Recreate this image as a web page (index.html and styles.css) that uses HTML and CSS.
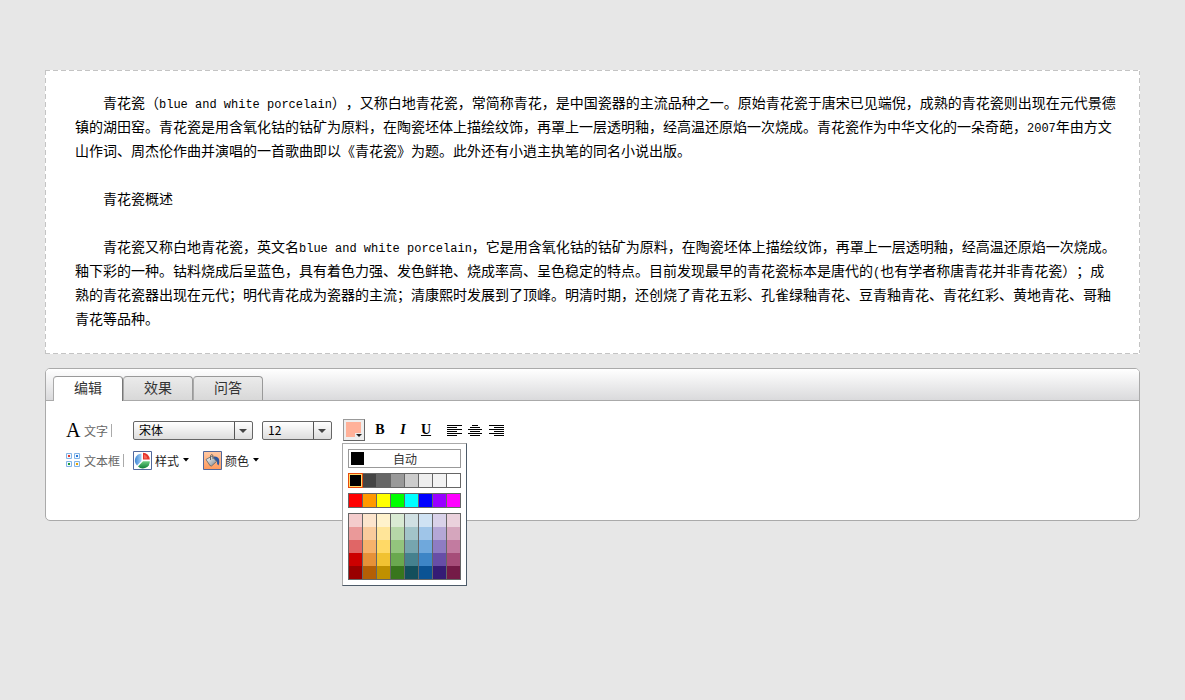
FILE: index.html
```html
<!DOCTYPE html>
<html lang="zh-CN">
<head>
<meta charset="utf-8">
<title>青花瓷</title>
<link rel="stylesheet" href="styles.css">
</head>
<body>
<main class="page">
  <article class="document">
    <p>青花瓷（<span class="latin">blue and white porcelain</span>），又称白地青花瓷，常简称青花，是中国瓷器的主流品种之一。原始青花瓷于唐宋已见端倪，成熟的青花瓷则出现在元代景德镇的湖田窑。青花瓷是用含氧化钴的钴矿为原料，在陶瓷坯体上描绘纹饰，再罩上一层透明釉，经高温还原焰一次烧成。青花瓷作为中华文化的一朵奇葩，<span class="latin">2007</span>年由方文山作词、周杰伦作曲并演唱的一首歌曲即以《青花瓷》为题。此外还有小逍主执笔的同名小说出版。</p>
    <p>青花瓷概述</p>
    <p>青花瓷又称白地青花瓷，英文名<span class="latin">blue and white porcelain</span>，它是用含氧化钴的钴矿为原料，在陶瓷坯体上描绘纹饰，再罩上一层透明釉，经高温还原焰一次烧成。釉下彩的一种。钴料烧成后呈蓝色，具有着色力强、发色鲜艳、烧成率高、呈色稳定的特点。目前发现最早的青花瓷标本是唐代的<span class="latin">(</span>也有学者称唐青花并非青花瓷）；成熟的青花瓷器出现在元代；明代青花成为瓷器的主流；清康熙时发展到了顶峰。明清时期，还创烧了青花五彩、孔雀绿釉青花、豆青釉青花、青花红彩、黄地青花、哥釉青花等品种。</p>
  </article>

  <section class="editor">
    <div class="tabs" role="tablist">
      <button class="tab active" type="button" role="tab" aria-selected="true">编辑</button>
      <button class="tab" type="button" role="tab" aria-selected="false">效果</button>
      <button class="tab" type="button" role="tab" aria-selected="false">问答</button>
    </div>
    <div class="tools">
      <div class="row">
        <div class="group-name">
          <span class="letter-icon" aria-hidden="true">A</span>
          <span class="group-text">文字</span>
        </div>
        <div class="select select-font">
          <select aria-label="字体"><option>宋体</option></select>
          <svg class="arrow" width="18" height="17" viewBox="0 0 18 17" aria-hidden="true"><path d="M0.500 0v17" stroke="#555"/><path d="M5 7h8l-4 4z" fill="#444"/></svg>
        </div>
        <div class="select select-size">
          <select aria-label="字号"><option>12</option></select>
          <svg class="arrow" width="18" height="17" viewBox="0 0 18 17" aria-hidden="true"><path d="M0.500 0v17" stroke="#555"/><path d="M5 7h8l-4 4z" fill="#444"/></svg>
        </div>
        <div class="color-picker">
          <button class="color-button" type="button" aria-label="文字颜色">
            <svg width="20" height="20" viewBox="0 0 20 20" aria-hidden="true"><path d="M2 2h15v15H2z" fill="#ffb199"/><path d="M11 13h7v5h-7z" fill="#ececec"/><path d="M12 14h6l-3 3z" fill="#222"/></svg>
          </button>
          <div class="palette">
            <button class="auto" type="button"><span class="auto-swatch"></span><span class="auto-text">自动</span></button>
            <div class="swatches grays">
              <button class="c000 selected" type="button" aria-label="黑"></button><button class="c444" type="button" aria-label="灰一"></button><button class="c666" type="button" aria-label="灰二"></button><button class="c999" type="button" aria-label="灰三"></button><button class="cccc" type="button" aria-label="灰四"></button><button class="ceee" type="button" aria-label="灰五"></button><button class="cf3" type="button" aria-label="灰六"></button><button class="cfff" type="button" aria-label="白"></button>
            </div>
            <div class="swatches brights">
              <button class="red" type="button" aria-label="红"></button><button class="orange" type="button" aria-label="橙"></button><button class="yellow" type="button" aria-label="黄"></button><button class="green" type="button" aria-label="绿"></button><button class="cyan" type="button" aria-label="青"></button><button class="blue" type="button" aria-label="蓝"></button><button class="purple" type="button" aria-label="紫"></button><button class="magenta" type="button" aria-label="品红"></button>
            </div>
            <div class="swatches shades" id="shades"></div>
          </div>
        </div>
        <div class="styles">
          <button class="icon-button" type="button" aria-label="粗体"><b>B</b></button>
          <button class="icon-button" type="button" aria-label="斜体"><b><i>I</i></b></button>
          <button class="icon-button" type="button" aria-label="下划线"><b><u>U</u></b></button>
        </div>
        <div class="aligns">
          <button class="icon-button" type="button" aria-label="左对齐"><svg width="15" height="13" viewBox="0 0 15 13"><path d="M0 1.500h15M0 3.500h10M0 5.500h15M0 7.500h10M0 9.500h15M0 11.500h10" stroke="#000"/></svg></button>
          <button class="icon-button" type="button" aria-label="居中"><svg width="15" height="13" viewBox="0 0 15 13"><path d="M4 1.500h6M2 3.500h10M0 5.500h14M2 7.500h10M0 9.500h14M2 11.500h10" stroke="#000"/></svg></button>
          <button class="icon-button" type="button" aria-label="右对齐"><svg width="15" height="13" viewBox="0 0 15 13"><path d="M0 1.500h15M5 3.500h10M0 5.500h15M5 7.500h10M0 9.500h15M5 11.500h10" stroke="#000"/></svg></button>
        </div>
      </div>
      <div class="row">
        <div class="group-name">
          <svg width="15" height="15" viewBox="0 0 15 15" aria-hidden="true"><g fill="#f2f8ff" stroke="#82b4e6"><path d="M.5.5h5v5h-5zM8.500.5h5v5h-5zM.5 8.500h5v5h-5zM8.500 8.500h5v5h-5z"/></g><path d="M2 2h2v2H2z" fill="#e23a2a"/><path d="M10 2h2v2h-2z" fill="#2a79d8"/><path d="M2 10h2v2H2z" fill="#1f9a35"/><path d="M10 10h2v2h-2z" fill="#e5a400"/></svg>
          <span class="group-text">文本框</span>
        </div>
        <button class="menu-button" type="button">
          <svg width="19" height="19" viewBox="0 0 19 19" aria-hidden="true"><defs><linearGradient id="pieBlue"><stop stop-color="#3f86d4"/><stop offset="1" stop-color="#a5d2f7"/></linearGradient><linearGradient id="pieGreen" x2="0" y2="1"><stop stop-color="#6fcf83"/><stop offset="1" stop-color="#0f7f36"/></linearGradient></defs><path d="M.5.5h18v18H.5z" fill="#fff" stroke="#52689c"/><path d="M8.500 2.500A7 7 0 0 0 4 14.500l4.500-4.500z" fill="url(#pieBlue)"/><path d="M10 1.800a6.800 6.800 0 0 1 6.800 6.700H10z" fill="#e5322b"/><path d="M11 3.500q3 1 3.500 4H11z" fill="#f4685a"/><path d="M16.800 10.200A7 7 0 0 1 5 15.500l5-5.300z" fill="url(#pieGreen)"/></svg>
          <span>样式</span>
          <svg width="7" height="4" viewBox="0 0 7 4" aria-hidden="true"><path d="M1 0h6L4 3.500z"/></svg>
        </button>
        <button class="menu-button" type="button">
          <svg width="19" height="19" viewBox="0 0 19 19" aria-hidden="true"><defs><linearGradient id="warm" x2="0" y2="1"><stop stop-color="#ffc9a5"/><stop offset="1" stop-color="#ff9a5c"/></linearGradient><linearGradient id="metal" x2="1" y2="1"><stop stop-color="#fff"/><stop offset="1" stop-color="#7f878e"/></linearGradient></defs><path d="M.5.5h18v18H.5z" fill="url(#warm)" stroke="#52689c"/><path d="M10.500 5.500q5-.5 5.700 3.500.5 3-.7 5.500-2-1-1.500-4L11 8z" fill="#2b559f"/><path d="M3 8.500l6-3.500 4.500 5.500-5 4.500q-2 0-2.500-2z" fill="url(#metal)" stroke="#5c6469" stroke-width=".8"/><path d="M7.500 9V4.500q1-2 2.500 0V8" fill="none" stroke="#666"/></svg>
          <span>颜色</span>
          <svg width="7" height="4" viewBox="0 0 7 4" aria-hidden="true"><path d="M1 0h6L4 3.500z"/></svg>
        </button>
      </div>
    </div>
  </section>
</main>
<script src="palette.js"></script>
</body>
</html>
```
FILE: styles.css
```css
* { box-sizing: border-box; }

body {
  margin: 0;
  background: #e7e7e7;
  color: #000;
  font-family: "Noto Sans CJK SC", sans-serif;
  font-size: 12px;
}

button, select {
  margin: 0;
  padding: 0;
  border: 0;
  background: none;
  color: inherit;
  font: inherit;
}

svg { display: block; flex: none; }

.page {
  display: flex;
  flex-direction: column;
  gap: 14px;
  padding: 70px 45px;
}

.document {
  --dash-x: repeating-linear-gradient(90deg, #c4c4c4 0 5px, #fff 5px 8px);
  --dash-y: repeating-linear-gradient(#c4c4c4 0 5px, #fff 5px 8px);
  display: flex;
  flex-direction: column;
  gap: 24px;
  padding: 20px 23px 24px 30px;
  background:
    var(--dash-x) top / 100% 1px no-repeat,
    var(--dash-x) bottom / 100% 1px no-repeat,
    var(--dash-y) left / 1px 100% no-repeat,
    var(--dash-y) right / 1px 100% no-repeat,
    #fff;
  font-size: 14px;
  line-height: 24px;
  text-spacing-trim: space-all;
}

.document p { margin: 0; text-indent: 28px; }

.latin {
  font-family: "Liberation Mono", monospace;
  font-size: 12px;
  line-height: 1;
}

.editor {
  min-height: 153px;
  border: 1px solid #aaa;
  border-radius: 5px;
  background: #fff;
}

.tabs {
  display: flex;
  height: 32px;
  padding: 7px 7px 0;
  border-bottom: 1px solid #aaa;
  border-radius: 4px 4px 0 0;
  background: linear-gradient(#fff, #dadadc);
}

.tab {
  width: 70px;
  height: 24px;
  border: 1px solid #999;
  border-left-color: #aaa;
  border-bottom: 0;
  border-radius: 4px 4px 0 0;
  background: linear-gradient(#ebebeb, #d8d8d8);
  color: #333;
  font-size: 14px;
  line-height: 20px;
  padding-bottom: 3px;
}

.tab.active { height: 25px; padding-bottom: 4px; border-right-color: #777; background: #fff; }

.tools {
  display: flex;
  flex-direction: column;
  gap: 8px;
  padding: 18px 20px;
}

.row { display: flex; align-items: center; height: 22px; }

.group-name {
  display: flex;
  align-items: center;
  gap: 3px;
  width: 67px;
  color: #666;
}

.letter-icon {
  width: 15px;
  color: #000;
  font-family: "Liberation Serif", serif;
  font-size: 20px;
  line-height: 20px;
}

.group-text {
  padding-right: 3px;
  border-right: 1px solid #aaa;
  line-height: 13px;
}

.select {
  display: grid;
  height: 19px;
  margin-right: 9px;
  border: 1px solid #666;
  border-radius: 2px;
  background: linear-gradient(#fff, #ddd);
}

.select-font { width: 120px; }
.select-size { width: 70px; margin-right: 11px; }

.select select {
  grid-area: 1 / 1;
  width: 100%;
  height: 16px;
  padding-left: 5px;
  appearance: none;
  line-height: 16px;
}

.arrow { grid-area: 1 / 1; justify-self: end; pointer-events: none; }

.color-picker { position: relative; margin-right: 5px; }

.color-button {
  display: block;
  width: 22px;
  height: 22px;
  border: 1px solid #999;
  border-right-color: #666;
  border-bottom-color: #666;
  background: #eee;
}

.palette {
  position: absolute;
  top: 24px;
  left: -1px;
  z-index: 1;
  display: flex;
  flex-direction: column;
  gap: 5px;
  width: 125px;
  padding: 5px;
  border: 1px solid #aaa;
  border-right-color: #4c5a68;
  border-bottom-color: #4c5a68;
  background: #fff;
}

.auto {
  display: flex;
  align-items: center;
  height: 19px;
  padding: 0 2px;
  border: 1px solid #999;
  line-height: 17px;
}

.auto-swatch { width: 13px; height: 13px; background: #000; }
.auto-text { flex: 1; padding-right: 12px; color: #333; text-align: center; }

.swatches {
  display: grid;
  grid-template-columns: repeat(8, 1fr);
  column-gap: 1px;
  border: 1px solid #666;
  background: #666;
}

.swatches button { height: 13px; }
.swatches .selected { outline: 1px solid #e84a0c; box-shadow: inset 0 0 0 1px #ffd96a; }

.c000 { background: #000; }
.c444 { background: #444; }
.c666 { background: #666; }
.c999 { background: #999; }
.cccc { background: #ccc; }
.ceee { background: #eee; }
.cf3 { background: #f3f3f3; }
.cfff { background: #fff; }

.red { background: #f00; }
.orange { background: #f90; }
.yellow { background: #ff0; }
.green { background: #0f0; }
.cyan { background: #0ff; }
.blue { background: #00f; }
.purple { background: #90f; }
.magenta { background: #f0f; }

.styles { display: flex; gap: 3px; margin-right: 11px; }
.aligns { display: flex; gap: 6px; }

.icon-button {
  min-width: 15px;
  font-family: "Liberation Serif", serif;
  font-size: 14px;
  line-height: 20px;
}

.styles .icon-button { width: 20px; }

.menu-button {
  display: flex;
  align-items: center;
  gap: 3px;
  margin-right: 14px;
  color: #222;
  line-height: 19px;
}
```
FILE: palette.js
```javascript
const shades = [
  ['#f4cccc', '#fce5cd', '#fff2cc', '#d9ead3', '#d0e0e3', '#cfe2f3', '#d9d2e9', '#ead1dc'],
  ['#ea9999', '#f9cb9c', '#ffe599', '#b6d7a8', '#a2c4c9', '#9fc5e8', '#b4a7d6', '#d5a6bd'],
  ['#e06666', '#f6b26b', '#ffd966', '#93c47d', '#76a5af', '#6fa8dc', '#8e7cc3', '#c27ba0'],
  ['#cc0000', '#e69138', '#f1c232', '#6aa84f', '#45818e', '#3d85c6', '#674ea7', '#a64d79'],
  ['#990000', '#b45f06', '#bf9000', '#38761d', '#134f5c', '#0b5394', '#351c75', '#741b47']
];

const grid = document.getElementById('shades');
for (const color of shades.flat()) {
  const swatch = document.createElement('button');
  swatch.type = 'button';
  swatch.style.background = color;
  swatch.setAttribute('aria-label', color);
  grid.append(swatch);
}
```
